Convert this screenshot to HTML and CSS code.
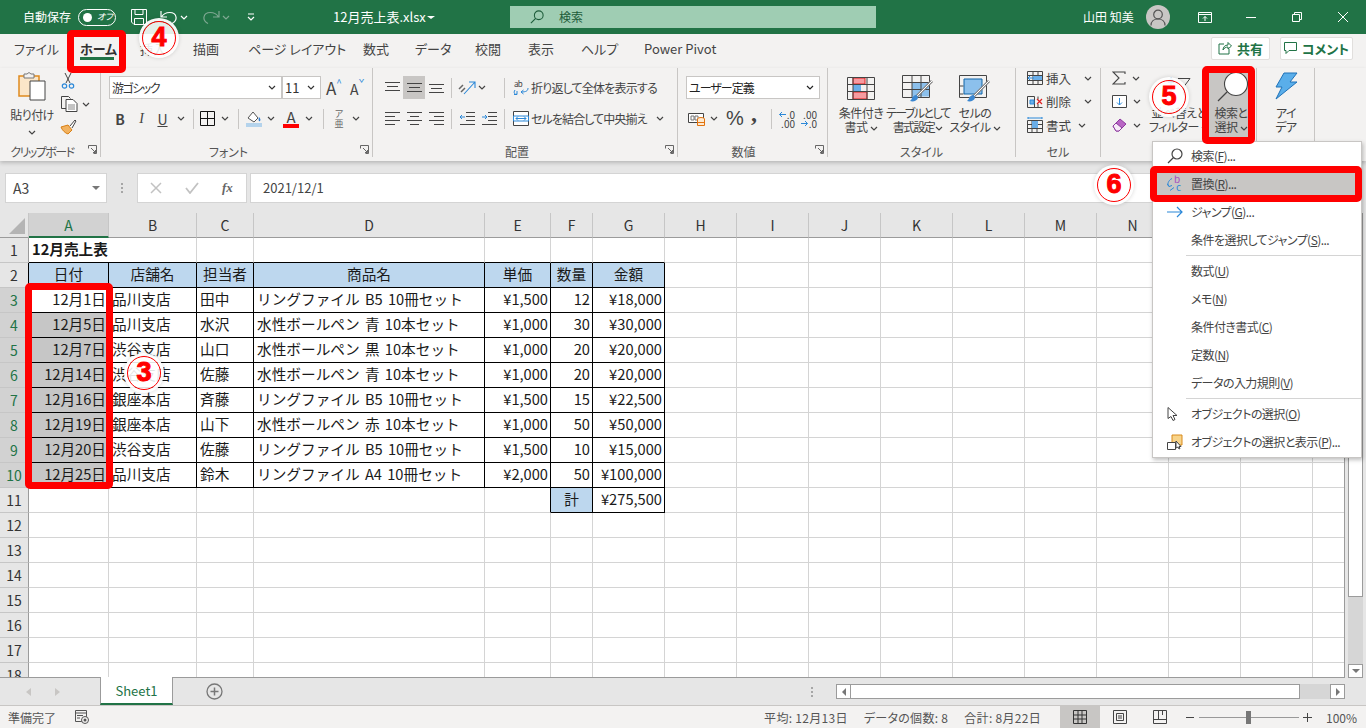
FILE: index.html
```html
<!DOCTYPE html>
<html lang="ja">
    <head>
        <meta charset="utf-8">
        <title>12月売上表.xlsx - Excel</title>
        <link rel="stylesheet" href="styles.css">
    </head>
    <body>
        <svg class="sprite" width="0" height="0">
            <symbol id="chev" viewBox="0 0 8 5"><path d="M1 1l3 3 3-3" fill="none" stroke="currentColor" stroke-width="1.2"/></symbol>
            <symbol id="launch" viewBox="0 0 9 9"><path d="M.5 .5h8v8M.5 .5v3M5.500 8.500h3M3 3l4.500 4.500M7.500 5v2.500H5" fill="none" stroke="#666"/></symbol>
            <symbol id="lens" viewBox="0 0 16 16"><circle cx="10" cy="6" r="5" fill="none" stroke="currentColor" stroke-width="1.200"/><path d="M6.500 9.500L1 15" stroke="currentColor" stroke-width="1.300"/></symbol>
        </svg>

        <header class="titlebar">
            <span class="autosave">自動保存</span>
            <span class="toggle"><i></i><em>オフ</em></span>
            <svg class="t-save" width="16" height="16" viewBox="0 0 16 16"><path d="M.5 .5h15v15H3l-2.500-2.500zM4 .5v5h8v-5M3.500 15.500v-6h9v6" fill="none" stroke="#fff"/></svg>
            <svg class="t-undo" width="18" height="14" viewBox="0 0 18 14"><path d="M1 1v6h6M1.500 7C5 1 15 1 16 7c.5 3-2 5.500-4 6.500" fill="none" stroke="#fff" stroke-width="1.200"/></svg>
            <svg class="t-chev" width="8" height="5"><use href="#chev"/></svg>
            <svg class="t-redo" width="18" height="14" viewBox="0 0 18 14"><path d="M17 1v6h-6M16.500 7C13 1 3 1 2 7c-.5 3 2 5.500 4 6.500" fill="none" stroke="#7fa892" stroke-width="1.200"/></svg>
            <svg class="t-chev dim" width="8" height="5"><use href="#chev"/></svg>
            <svg class="t-custom" width="8" height="8" viewBox="0 0 8 8"><path d="M1 1h6M1 4l3 3 3-3" fill="none" stroke="#fff" stroke-width="1.200"/></svg>
            <span class="doc-name">12月売上表.xlsx</span>
            <span class="doc-caret"></span>
            <div class="searchbox">
                <svg width="14" height="14"><use href="#lens"/></svg>
                <span>検索</span>
            </div>
            <span class="user">山田 知美</span>
            <span class="avatar">
                <svg width="16" height="17" viewBox="0 0 16 17"><circle cx="8" cy="5.500" r="4.300" fill="none" stroke="#555" stroke-width="1.200"/><path d="M1 16.500c0-4 3-6.500 7-6.500s7 2.500 7 6.500" fill="none" stroke="#555" stroke-width="1.200"/></svg>
            </span>
            <svg class="w-display" width="14" height="11" viewBox="0 0 14 11"><path d="M.5 .5h13v10H.5zM.5 2.500h13M7 9V4.500M5 6.500l2-2 2 2" fill="none" stroke="#fff"/></svg>
            <svg class="w-min" width="10" height="1"><path d="M0 .5h10" stroke="#fff"/></svg>
            <svg class="w-max" width="10" height="10" viewBox="0 0 10 10"><path d="M.5 2.500h7v7h-7zM2.500 2.500v-2h7v7h-2" fill="none" stroke="#fff"/></svg>
            <svg class="w-close" width="10" height="10" viewBox="0 0 10 10"><path d="M0 0l10 10M10 0L0 10" stroke="#fff"/></svg>
        </header>

        <nav class="tabs">
            <a class="tab-file">ファイル</a>
            <a class="tab-home">ホーム</a>
            <a class="tab-insert">挿入</a>
            <a class="tab-draw">描画</a>
            <a class="tab-page">ページ レイアウト</a>
            <a class="tab-formula">数式</a>
            <a class="tab-data">データ</a>
            <a class="tab-review">校閲</a>
            <a class="tab-view">表示</a>
            <a class="tab-help">ヘルプ</a>
            <a class="tab-pivot">Power Pivot</a>
            <span class="spacer"></span>
            <button class="share">
                <svg width="14" height="14" viewBox="0 0 14 14"><path d="M6 3H1v10h10V8M5 9c0-3 2-5 5-5V1.500L13.500 5 10 8V6C8 6 6 7 5 9z" fill="none" stroke="#217346"/></svg>
                共有
            </button>
            <button class="comment">
                <svg width="13" height="13" viewBox="0 0 13 13"><path d="M.5 .5h12v8H5l-3 3v-3H.5z" fill="none" stroke="#217346"/></svg>
                コメント
            </button>
        </nav>

        <section class="ribbon">
            <div class="group g-clip">
                <div class="group-body clip-body">
                    <div class="paste">
                        <svg width="28" height="29" viewBox="0 0 28 29"><path d="M1 4h20v20H1z" fill="#fbe6c8" stroke="#e08a1e" stroke-width="1.500"/><path d="M6 4V2h3l2-1.500L13 2h3v4H6z" fill="#f3f2f1" stroke="#777"/><path d="M12 9h15v19H12z" fill="#fff" stroke="#444"/></svg>
                        <span>貼り付け</span>
                        <svg class="chev" width="8" height="5"><use href="#chev"/></svg>
                    </div>
                    <div class="clip-tools">
                        <svg width="14" height="17" viewBox="0 0 14 17"><path d="M4 1l5 10M10 1L5 11" stroke="#444"/><circle cx="3.500" cy="14" r="2.200" fill="none" stroke="#2b88d8" stroke-width="1.200"/><circle cx="10.500" cy="14" r="2.200" fill="none" stroke="#2b88d8" stroke-width="1.200"/></svg>
                        <span class="copy">
                            <svg width="17" height="16" viewBox="0 0 17 16"><path d="M5 12.500H.5V.5h7l2 2" fill="none" stroke="#444"/><path d="M5 3.500h7l4 4v8H5z" fill="#fff" stroke="#444"/><path d="M7 9h7M7 11h7M7 13h7" stroke="#888"/></svg>
                            <svg class="chev" width="8" height="5"><use href="#chev"/></svg>
                        </span>
                        <svg width="17" height="16" viewBox="0 0 17 16"><path d="M1 8l7-2 4 5-4 4C5 14 2 11 1 8z" fill="#f2b25f" stroke="#d87f13"/><path d="M10 7l5-6 1 1-4 7" fill="#fff" stroke="#444"/></svg>
                    </div>
                </div>
                <div class="group-label off narrow">クリップボード<svg class="launch" width="9" height="9"><use href="#launch"/></svg></div>
            </div>

            <div class="group g-font">
                <div class="group-body rows">
                    <div class="row">
                        <span class="select font-name">游ゴシック<svg class="chev" width="8" height="5"><use href="#chev"/></svg></span>
                        <span class="select font-size">11<svg class="chev" width="8" height="5"><use href="#chev"/></svg></span>
                        <span class="font-grow">A<sup>^</sup></span>
                        <span class="font-shrink">A<sup>ˇ</sup></span>
                    </div>
                    <div class="row">
                        <b class="ib w22 fmt">B</b>
                        <i class="ib w21 fmt serif">I</i>
                        <u class="ib w21 fmt">U</u>
                        <span class="ib w16"><svg width="8" height="5"><use href="#chev"/></svg></span>
                        <span class="sep"></span>
                        <span class="ib w18">
                            <svg width="15" height="15" viewBox="0 0 15 15"><path d="M.5 .5h14v14H.5zM7.500 0v15M0 7.500h15" fill="none" stroke="#111"/></svg>
                        </span>
                        <span class="ib w18"><svg width="8" height="5"><use href="#chev"/></svg></span>
                        <span class="sep"></span>
                        <span class="ib w22">
                            <svg width="16" height="16" viewBox="0 0 16 16"><path d="M2 7l5-6 5 6-4 4z" fill="#fff" stroke="#555"/><path d="M13 6c1 1 2 3 1 4s-2-1-1-4z" fill="#2b7cd3"/><path d="M0 12h16v4H0z" fill="#b4d3ec"/></svg>
                        </span>
                        <span class="ib w12"><svg width="8" height="5"><use href="#chev"/></svg></span>
                        <span class="ib w28 color-a">A<i></i></span>
                        <span class="ib w8"><svg width="8" height="5"><use href="#chev"/></svg></span>
                        <span class="sep wide"></span>
                        <span class="ib w22 phonetic">ア<small>亜</small></span>
                        <span class="ib w12"><svg width="8" height="5"><use href="#chev"/></svg></span>
                    </div>
                </div>
                <div class="group-label off">フォント<svg class="launch" width="9" height="9"><use href="#launch"/></svg></div>
            </div>

            <div class="group g-align">
                <div class="group-body rows">
                    <div class="row">
                        <span class="ib w22"><svg width="15" height="13" viewBox="0 0 15 13"><path d="M0 1.500h15M2 5.500h11M0 9.500h15" stroke="#444"/></svg></span>
                        <span class="ib w22 on"><svg width="15" height="13" viewBox="0 0 15 13"><path d="M0 2.500h15M2 6.500h11M0 10.500h15" stroke="#444"/></svg></span>
                        <span class="ib w22"><svg width="15" height="13" viewBox="0 0 15 13"><path d="M0 3.500h15M2 7.500h11M0 11.500h15" stroke="#444"/></svg></span>
                        <span class="sep"></span>
                        <span class="ib w22 orient">
                            <svg width="18" height="16" viewBox="0 0 18 16"><path d="M1 9l4-4M3 12l4-4" stroke="#666" stroke-width="1.500"/><path d="M6 14L17 2M11 2h6v6" fill="none" stroke="#2b88d8" stroke-width="1.100"/></svg>
                        </span>
                        <span class="ib w8"><svg width="8" height="5"><use href="#chev"/></svg></span>
                        <span class="sep far"></span>
                        <span class="txt-btn">
                            <svg width="16" height="17" viewBox="0 0 16 17"><text x="1" y="8" class="ab">ab</text><path d="M2 11c-2 3 0 5 2 4M4 12v3.500H1M15 9c0 3-2 4-7 4m2.500-2L8 13l2.500 2" fill="none" stroke="#2b88d8"/></svg>
                            折り返して全体を表示する
                        </span>
                    </div>
                    <div class="row">
                        <span class="ib w22"><svg width="15" height="13" viewBox="0 0 15 13"><path d="M0 .5h15M0 4.500h10M0 8.500h15M0 12.500h10" stroke="#444"/></svg></span>
                        <span class="ib w22"><svg width="15" height="13" viewBox="0 0 15 13"><path d="M0 .5h15M3 4.500h9M0 8.500h15M3 12.500h9" stroke="#444"/></svg></span>
                        <span class="ib w22"><svg width="15" height="13" viewBox="0 0 15 13"><path d="M0 .5h15M5 4.500h10M0 8.500h15M5 12.500h10" stroke="#444"/></svg></span>
                        <span class="sep"></span>
                        <span class="ib w22"><svg width="15" height="13" viewBox="0 0 15 13"><path d="M6 .5h9M6 4.500h9M6 8.500h9M0 12.500h15" stroke="#444"/><path d="M5 5H0m2-2L0 5l2 2" fill="none" stroke="#2b88d8"/></svg></span>
                        <span class="ib w22"><svg width="15" height="13" viewBox="0 0 15 13"><path d="M6 .5h9M6 4.500h9M6 8.500h9M0 12.500h15" stroke="#444"/><path d="M0 5h5M3 3l2 2-2 2" fill="none" stroke="#2b88d8"/></svg></span>
                        <span class="sep"></span>
                        <span class="txt-btn merge">
                            <svg width="16" height="15" viewBox="0 0 16 15"><path d="M.5 .5h15v14H.5z" fill="#fff" stroke="#444"/><path d="M.5 5h15v5H.5z" fill="#fff" stroke="#2b88d8"/><path d="M3 7.500h10M5 5.500l-2 2 2 2M11 5.500l2 2-2 2" fill="none" stroke="#2b88d8"/></svg>
                            セルを結合して中央揃え
                            <svg class="chev" width="8" height="5"><use href="#chev"/></svg>
                        </span>
                    </div>
                </div>
                <div class="group-label off">配置<svg class="launch" width="9" height="9"><use href="#launch"/></svg></div>
            </div>

            <div class="group g-number">
                <div class="group-body rows">
                    <div class="row">
                        <span class="select num-format">ユーザー定義<svg class="chev" width="8" height="5"><use href="#chev"/></svg></span>
                    </div>
                    <div class="row">
                        <span class="ib w22">
                            <svg width="18" height="16" viewBox="0 0 18 16"><path d="M.5 2.500h15v9H.5z" fill="#fff" stroke="#444"/><path d="M3 5h3v4H3zM7 5h3v4H7z" fill="none" stroke="#777"/><ellipse cx="13" cy="8" rx="3.500" ry="1.500" fill="#fde9d0" stroke="#e2730f"/><path d="M9.500 8v6.500h7V8M9.500 11.500h7" fill="#fde9d0" stroke="#e2730f"/></svg>
                        </span>
                        <span class="ib w12"><svg width="8" height="5"><use href="#chev"/></svg></span>
                        <span class="ib w24 pct">%</span>
                        <span class="ib w14 comma">,</span>
                        <span class="sep mid"></span>
                        <span class="ib w22 dec">
                            <small><svg width="7" height="7" viewBox="0 0 7 7"><path d="M7 3.500H.5M3 1L.5 3.500 3 6" fill="none" stroke="#2b88d8"/></svg>.0</small>
                            <small>.00</small>
                        </span>
                        <span class="ib w22 dec">
                            <small>.00</small>
                            <small><svg width="7" height="7" viewBox="0 0 7 7"><path d="M0 3.500h6.500M4 1l2.500 2.500L4 6" fill="none" stroke="#2b88d8"/></svg>.0</small>
                        </span>
                    </div>
                </div>
                <div class="group-label off wider">数値<svg class="launch" width="9" height="9"><use href="#launch"/></svg></div>
            </div>

            <div class="group g-styles">
                <div class="group-body bigs">
                    <div class="big w56">
                        <svg width="29" height="23" viewBox="0 0 29 23"><path d="M6 1h12v6H6zM6 15h14v7H6z" fill="#f79ba0" stroke="#e02020"/><path d="M6 8h8v6H6z" fill="#6aaee8"/><path d="M.5 .5h27v22H.5zM.5 7.500h27M.5 14.500h27M6 0v23M20 0v23" fill="none" stroke="#444"/></svg>
                        <span>条件付き<br>書式 <svg width="8" height="5"><use href="#chev"/></svg></span>
                    </div>
                    <div class="big w58">
                        <svg width="32" height="27" viewBox="0 0 32 27"><path d="M10 7.500h18v14H10z" fill="#8cc0ec"/><path d="M.5 .5h27v22H.5zM.5 7.500h27M.5 14.500h27M10 0v23M19 0v23" fill="none" stroke="#444"/><path d="M30 6L14 22" stroke="#888" stroke-width="3"/><path d="M30 6L14 22" stroke="#fff"/><path d="M15 20c-3 0-5 2-5 3s-1 2-2 3c3 1 7 0 8-3z" fill="#3b87d1"/></svg>
                        <span class="tight">テーブルとして<br>書式設定 <svg width="8" height="5"><use href="#chev"/></svg></span>
                    </div>
                    <div class="big w56">
                        <svg width="32" height="27" viewBox="0 0 32 27"><path d="M.5 .5h27v22H.5z" fill="none" stroke="#444"/><path d="M5 4h18v15H5z" fill="#8cc0ec" stroke="#0f64a8"/><path d="M.5 19h4M.5 11h4" stroke="#444"/><path d="M30 6L14 22" stroke="#888" stroke-width="3"/><path d="M30 6L14 22" stroke="#fff"/><path d="M15 20c-3 0-5 2-5 3s-1 2-2 3c3 1 7 0 8-3z" fill="#3b87d1"/></svg>
                        <span>セルの<br>スタイル <svg width="8" height="5"><use href="#chev"/></svg></span>
                    </div>
                </div>
                <div class="group-label">スタイル</div>
            </div>

            <div class="group g-cells">
                <div class="group-body cell-list">
                    <span class="cell-btn">
                        <svg width="16" height="14" viewBox="0 0 16 14"><path d="M.5 .5h15v13H.5zM.5 4.500h15M.5 9.500h15M6 0v14M11 0v14" fill="none" stroke="#444"/><path d="M6 5h9v4H6z" fill="#6aaee8"/><path d="M7 7H1m2-2L1 7l2 2" fill="none" stroke="#2b88d8"/></svg>
                        挿入<svg class="chev" width="8" height="5"><use href="#chev"/></svg>
                    </span>
                    <span class="cell-btn">
                        <svg width="16" height="14" viewBox="0 0 16 14"><path d="M.5 1.500h7M.5 12.500h15M.5 1.500v11M7.500 1.500v11M11 1.500v3M11 9v3.500" fill="none" stroke="#444"/><path d="M3 5h4v4H3z" fill="#6aaee8" stroke="#2b88d8"/><path d="M10 4l5 5M15 4l-5 5" stroke="#e02020" stroke-width="1.200"/></svg>
                        削除<svg class="chev" width="8" height="5"><use href="#chev"/></svg>
                    </span>
                    <span class="cell-btn short">
                        <svg width="16" height="16" viewBox="0 0 16 16"><path d="M.5 3.500h15v12H.5zM.5 7.500h15M.5 11.500h15M5 3v13M10 3v13" fill="none" stroke="#444"/><path d="M5 4h6v7H5z" fill="#6aaee8"/><path d="M1 1h14M1 0v2M15 0v2" stroke="#2b88d8"/></svg>
                        書式<svg class="chev" width="8" height="5"><use href="#chev"/></svg>
                    </span>
                </div>
                <div class="group-label">セル</div>
            </div>

            <div class="group g-edit">
                <div class="group-body edit-body">
                    <div class="edit-list">
                        <span class="edit-btn">
                            <svg width="14" height="14" viewBox="0 0 14 14"><path d="M13 3V1H1l6 6-6 6h12v-2" fill="none" stroke="#444" stroke-width="1.100"/></svg>
                            <svg class="chev" width="8" height="5"><use href="#chev"/></svg>
                        </span>
                        <span class="edit-btn">
                            <svg width="15" height="13" viewBox="0 0 15 13"><path d="M.5 .5h14v12H.5z" fill="#fff" stroke="#444"/><path d="M7.500 3v7M5 7.500l2.500 2.500L10 7.500" fill="none" stroke="#2b88d8"/></svg>
                            <svg class="chev" width="8" height="5"><use href="#chev"/></svg>
                        </span>
                        <span class="edit-btn">
                            <svg width="15" height="14" viewBox="0 0 15 14"><path d="M1 8l7-7 6 5-7 7H4z" fill="#b866c4" stroke="#8e3aa0"/><path d="M1 8l3-3 6 5-3 3H4z" fill="#f7ecf8" stroke="#8e3aa0"/></svg>
                            <svg class="chev" width="8" height="5"><use href="#chev"/></svg>
                        </span>
                    </div>
                    <div class="big sort">
                        <svg width="26" height="26" viewBox="0 0 26 26"><path d="M5 2l-3 5h6zM5 7v12" fill="#2b88d8" stroke="#2b88d8"/><path d="M12 3h12L18 11v8" fill="none" stroke="#444"/></svg>
                        <span>並べ替えと<br>フィルター <svg width="8" height="5"><use href="#chev"/></svg></span>
                    </div>
                    <div class="big find">
                        <svg class="find-lens" width="38" height="30" viewBox="0 0 38 30"><circle cx="24" cy="12" r="11.500" fill="#fff" stroke="#444" stroke-width="1.100"/><path d="M15 20L6 29" stroke="#444" stroke-width="1.200"/></svg>
                        <span>検索と<br>選択 <svg width="8" height="5"><use href="#chev"/></svg></span>
                    </div>
                </div>
            </div>

            <div class="group g-ideas">
                <div class="group-body bigs">
                    <div class="big w58">
                        <svg width="23" height="28" viewBox="0 0 23 28"><path d="M9 1h13l-7 9h7L1 27l6-12H1z" fill="#5aaeea" stroke="#1f72b8"/></svg>
                        <span>アイ<br>デア</span>
                    </div>
                </div>
            </div>
        </section>

        <section class="formula-area">
            <div class="namebox">A3<span class="name-caret"></span></div>
            <div class="formula-dots"><i></i><i></i><i></i></div>
            <div class="formula-btns">
                <svg width="12" height="12" viewBox="0 0 12 12"><path d="M1 1l10 10M11 1L1 11" stroke="#c2c2c2" stroke-width="1.500"/></svg>
                <svg width="14" height="12" viewBox="0 0 14 12"><path d="M1 6l4 5 8-10" fill="none" stroke="#c2c2c2" stroke-width="1.800"/></svg>
                <em>fx</em>
            </div>
            <div class="formula-input">2021/12/1</div>
        </section>

        <section class="sheet">
            <div class="grid-wrap">
                <table class="grid">
                    <colgroup>
                        <col class="c-head"><col class="c-a"><col class="c-b"><col class="c-c"><col class="c-d"><col class="c-e"><col class="c-f"><col class="c-g">
                        <col class="c-n"><col class="c-n"><col class="c-n"><col class="c-n"><col class="c-n"><col class="c-n"><col class="c-n"><col class="c-n"><col class="c-n"><col class="c-n">
                    </colgroup>
                    <thead>
                        <tr>
                            <th class="corner"><span></span></th>
                            <th class="cur">A</th><th>B</th><th>C</th><th>D</th><th>E</th><th>F</th><th>G</th><th>H</th><th>I</th><th>J</th><th>K</th><th>L</th><th>M</th><th>N</th><th>O</th><th>P</th><th></th>
                        </tr>
                    </thead>
                    <tbody>
                        <tr><th>1</th><td class="title under" colspan="2">12月売上表</td><td class="under"></td><td class="under"></td><td class="under"></td><td class="under"></td><td class="under"></td><td></td><td></td><td></td><td></td><td></td><td></td><td></td><td></td><td></td><td></td></tr>
                        <tr class="t"><th class="edge">2</th><td class="hd">日付</td><td class="hd">店舗名</td><td class="hd">担当者</td><td class="hd">商品名</td><td class="hd">単価</td><td class="hd">数量</td><td class="hd">金額</td><td></td><td></td><td></td><td></td><td></td><td></td><td></td><td></td><td></td><td></td></tr>
                        <tr class="t"><th class="edge cur-row">3</th><td class="num">12月1日</td><td>品川支店</td><td>田中</td><td class="item">リングファイル B5 10冊セット</td><td class="num">¥1,500</td><td class="num">12</td><td class="num">¥18,000</td><td></td><td></td><td></td><td></td><td></td><td></td><td></td><td></td><td></td><td></td></tr>
                        <tr class="t"><th class="edge cur-row">4</th><td class="num sel">12月5日</td><td>品川支店</td><td>水沢</td><td class="item">水性ボールペン 青 10本セット</td><td class="num">¥1,000</td><td class="num">30</td><td class="num">¥30,000</td><td></td><td></td><td></td><td></td><td></td><td></td><td></td><td></td><td></td><td></td></tr>
                        <tr class="t"><th class="edge cur-row">5</th><td class="num sel">12月7日</td><td>渋谷支店</td><td>山口</td><td class="item">水性ボールペン 黒 10本セット</td><td class="num">¥1,000</td><td class="num">20</td><td class="num">¥20,000</td><td></td><td></td><td></td><td></td><td></td><td></td><td></td><td></td><td></td><td></td></tr>
                        <tr class="t"><th class="edge cur-row">6</th><td class="num sel">12月14日</td><td>渋谷支店</td><td>佐藤</td><td class="item">水性ボールペン 青 10本セット</td><td class="num">¥1,000</td><td class="num">20</td><td class="num">¥20,000</td><td></td><td></td><td></td><td></td><td></td><td></td><td></td><td></td><td></td><td></td></tr>
                        <tr class="t"><th class="edge cur-row">7</th><td class="num sel">12月16日</td><td>銀座本店</td><td>斉藤</td><td class="item">リングファイル B5 10冊セット</td><td class="num">¥1,500</td><td class="num">15</td><td class="num">¥22,500</td><td></td><td></td><td></td><td></td><td></td><td></td><td></td><td></td><td></td><td></td></tr>
                        <tr class="t"><th class="edge cur-row">8</th><td class="num sel">12月19日</td><td>銀座本店</td><td>山下</td><td class="item">水性ボールペン 赤 10本セット</td><td class="num">¥1,000</td><td class="num">50</td><td class="num">¥50,000</td><td></td><td></td><td></td><td></td><td></td><td></td><td></td><td></td><td></td><td></td></tr>
                        <tr class="t"><th class="edge cur-row">9</th><td class="num sel">12月20日</td><td>渋谷支店</td><td>佐藤</td><td class="item">リングファイル B5 10冊セット</td><td class="num">¥1,500</td><td class="num">10</td><td class="num">¥15,000</td><td></td><td></td><td></td><td></td><td></td><td></td><td></td><td></td><td></td><td></td></tr>
                        <tr class="t"><th class="edge cur-row">10</th><td class="num sel">12月25日</td><td>品川支店</td><td>鈴木</td><td class="item">リングファイル A4 10冊セット</td><td class="num">¥2,000</td><td class="num">50</td><td class="num">¥100,000</td><td></td><td></td><td></td><td></td><td></td><td></td><td></td><td></td><td></td><td></td></tr>
                        <tr><th>11</th><td></td><td></td><td></td><td></td><td class="right-line"></td><td class="hd box">計</td><td class="num box">¥275,500</td><td></td><td></td><td></td><td></td><td></td><td></td><td></td><td></td><td></td><td></td></tr>
                        <tr><th>12</th><td></td><td></td><td></td><td></td><td></td><td></td><td></td><td></td><td></td><td></td><td></td><td></td><td></td><td></td><td></td><td></td><td></td></tr>
                        <tr><th>13</th><td></td><td></td><td></td><td></td><td></td><td></td><td></td><td></td><td></td><td></td><td></td><td></td><td></td><td></td><td></td><td></td><td></td></tr>
                        <tr><th>14</th><td></td><td></td><td></td><td></td><td></td><td></td><td></td><td></td><td></td><td></td><td></td><td></td><td></td><td></td><td></td><td></td><td></td></tr>
                        <tr><th>15</th><td></td><td></td><td></td><td></td><td></td><td></td><td></td><td></td><td></td><td></td><td></td><td></td><td></td><td></td><td></td><td></td><td></td></tr>
                        <tr><th>16</th><td></td><td></td><td></td><td></td><td></td><td></td><td></td><td></td><td></td><td></td><td></td><td></td><td></td><td></td><td></td><td></td><td></td></tr>
                        <tr><th>17</th><td></td><td></td><td></td><td></td><td></td><td></td><td></td><td></td><td></td><td></td><td></td><td></td><td></td><td></td><td></td><td></td><td></td></tr>
                        <tr><th>18</th><td></td><td></td><td></td><td></td><td></td><td></td><td></td><td></td><td></td><td></td><td></td><td></td><td></td><td></td><td></td><td></td><td></td></tr>
                    </tbody>
                </table>
            </div>
            <div class="vscroll">
                <span class="v-thumb"></span>
                <span class="v-rest"></span>
                <span class="v-down"></span>
            </div>
        </section>

        <section class="sheetbar">
            <span class="nav-arrow left"></span>
            <span class="nav-arrow right"></span>
            <span class="sheet-tab">Sheet1</span>
            <svg class="add-sheet" width="17" height="17" viewBox="0 0 17 17"><circle cx="8.500" cy="8.500" r="7.500" fill="none" stroke="#777" stroke-width="1.300"/><path d="M8.500 4.500v8M4.500 8.500h8" stroke="#777" stroke-width="1.500"/></svg>
            <span class="spacer"></span>
            <span class="bar-dots"><i></i><i></i><i></i></span>
            <div class="hscroll">
                <span class="h-btn"><i class="tri-l"></i></span>
                <span class="h-thumb"></span>
                <span class="h-track"></span>
                <span class="h-btn"><i class="tri-r"></i></span>
            </div>
        </section>

        <footer class="statusbar">
            <span class="ready">準備完了</span>
            <svg class="macro" width="14" height="14" viewBox="0 0 14 14"><path d="M.5 .5h11v11H.5zM.5 3h11M2 5.500h6M2 8h3" fill="none" stroke="#555"/><circle cx="10" cy="10" r="3.500" fill="#f3f2f1" stroke="#555"/><circle cx="10" cy="10" r="1.500" fill="#555"/></svg>
            <span class="spacer"></span>
            <span class="stat">平均: 12月13日</span>
            <span class="stat">データの個数: 8</span>
            <span class="stat">合計: 8月22日</span>
            <span class="view on">
                <svg width="14" height="14" viewBox="0 0 14 14"><path d="M.5 .5h13v13H.5zM5 0v14M9 0v14M0 5h14M0 9h14" fill="none" stroke="#333"/></svg>
            </span>
            <span class="view">
                <svg width="14" height="14" viewBox="0 0 14 14"><path d="M.5 .5h13v13H.5zM3.500 3.500h7v7h-7zM5 6h4M5 8h4" fill="none" stroke="#444"/></svg>
            </span>
            <span class="view">
                <svg width="14" height="14" viewBox="0 0 14 14"><path d="M.5 .5h13v13H.5zM.5 9.500h13M5.500 0v9.500M9.500 0v5" fill="none" stroke="#444"/></svg>
            </span>
            <div class="zoom">
                <span class="z-minus"></span>
                <span class="z-track"><i></i></span>
                <span class="z-plus"></span>
            </div>
            <span class="pct-label">100%</span>
        </footer>

        <div class="menu">
            <div class="menu-item"><svg class="m-icon" width="16" height="16"><use href="#lens"/></svg><span>検索(<u>F</u>)...</span></div>
            <div class="menu-item active">
                <svg class="m-icon" width="16" height="17" viewBox="0 0 16 17"><text x="7" y="7" class="sb">b</text><text x="9" y="15" class="sc">c</text><path d="M5 3C1 5 0 9 2 11M0 8l2 3 3-1M3 15l4-3" fill="none" stroke="#2b88d8"/></svg>
                <span>置換(<u>R</u>)...</span>
            </div>
            <div class="menu-item"><svg class="m-icon" width="16" height="12" viewBox="0 0 16 12"><path d="M0 6h15M10 1l5 5-5 5" fill="none" stroke="#2b88d8" stroke-width="1.200"/></svg><span>ジャンプ(<u>G</u>)...</span></div>
            <div class="menu-item"><span>条件を選択してジャンプ(<u>S</u>)...</span></div>
            <div class="menu-sep"></div>
            <div class="menu-item"><span>数式(<u>U</u>)</span></div>
            <div class="menu-item"><span>メモ(<u>N</u>)</span></div>
            <div class="menu-item"><span>条件付き書式(<u>C</u>)</span></div>
            <div class="menu-item"><span>定数(<u>N</u>)</span></div>
            <div class="menu-item"><span>データの入力規則(<u>V</u>)</span></div>
            <div class="menu-sep"></div>
            <div class="menu-item"><svg class="m-icon" width="12" height="15" viewBox="0 0 12 15"><path d="M1 1v11l3-2 2 4 2-1-2-4h4z" fill="#fff" stroke="#444"/></svg><span>オブジェクトの選択(<u>O</u>)</span></div>
            <div class="menu-item"><svg class="m-icon" width="16" height="16" viewBox="0 0 16 16"><path d="M5 1h10v10H5z" fill="#f8d48a" stroke="#d88a1c"/><path d="M.5 8.500h8v7h-8z" fill="#fff" stroke="#444"/><path d="M9 7v7l2-1 1 2 1-.5-1-2h2z" fill="#fff" stroke="#444"/></svg><span>オブジェクトの選択と表示(<u>P</u>)...</span></div>
        </div>

        <div class="mark mark-home"></div>
        <div class="mark mark-find"></div>
        <div class="mark mark-replace"></div>
        <div class="mark mark-dates"></div>
        <div class="badge badge-3">3</div>
        <div class="badge badge-4">4</div>
        <div class="badge badge-5">5</div>
        <div class="badge badge-6">6</div>
    </body>
</html>
```

FILE: styles.css
```css
* {
    box-sizing: border-box;
}
html, body {
    margin: 0;
    padding: 0;
}
body {
    width: 1366px;
    height: 728px;
    overflow: hidden;
    position: relative;
    display: flex;
    flex-direction: column;
    background-color: #e6e6e6;
    color: #444;
    font-family: "Noto Sans CJK JP", "Noto Sans", sans-serif;
    font-size: 12px;
    font-feature-settings: "palt";
}
svg {
    display: block;
    flex: none;
}
.sprite {
    position: absolute;
}
.spacer {
    flex: 1;
}

/* title bar */
.titlebar {
    height: 34px;
    flex: none;
    display: flex;
    align-items: center;
    background-color: #217346;
    color: #fff;
    padding-left: 23px;
}
.autosave {
    width: 48px;
    margin-bottom: 2px;
}
.toggle {
    margin-left: 7px;
    width: 38px;
    height: 17px;
    border: 1px solid #fff;
    border-radius: 9px;
    display: flex;
    align-items: center;
    padding-left: 4px;
}
.toggle i {
    width: 9px;
    height: 9px;
    border-radius: 50%;
    background-color: #fff;
}
.toggle em {
    font-size: 9px;
    margin-left: 5px;
    line-height: 12px;
}
.t-save {
    margin-left: 15px;
}
.t-undo {
    margin-left: 13px;
}
.t-chev {
    margin-left: 2px;
    color: #fff;
}
.t-chev.dim {
    color: #7fa892;
}
.t-redo {
    margin-left: 14px;
}
.t-custom {
    margin-left: 17px;
}
.doc-name {
    margin-left: 78px;
    margin-bottom: 2px;
    width: 90px;
    font-size: 13px;
    white-space: nowrap;
}
.doc-caret {
    margin-left: 4px;
    border-left: 4px solid transparent;
    border-right: 4px solid transparent;
    border-top: 3px solid #fff;
}
.searchbox {
    margin-left: 75px;
    margin-bottom: 1px;
    width: 366px;
    height: 22px;
    background-color: #9fcdb3;
    color: #1d5c3a;
    display: flex;
    align-items: center;
    padding-left: 20px;
}
.searchbox span {
    margin-left: 15px;
}
.user {
    margin-left: 207px;
    margin-bottom: 2px;
    width: 52px;
    white-space: nowrap;
}
.avatar {
    margin-left: 11px;
    width: 24px;
    height: 24px;
    border-radius: 50%;
    background-color: #c8c6c4;
    display: flex;
    align-items: center;
    justify-content: center;
}
.w-display {
    margin-left: 28px;
}
.w-min {
    margin-left: 34px;
}
.w-max {
    margin-left: 36px;
}
.w-close {
    margin-left: 36px;
}

/* tabs */
.tabs {
    height: 34px;
    flex: none;
    display: flex;
    align-items: center;
    background-color: #f3f2f1;
    font-size: 13px;
    padding-right: 13px;
    padding-bottom: 6px;
    white-space: nowrap;
}
.tabs a {
    display: block;
}
.tab-file { margin-left: 14px; width: 36px; }
.tab-home {
    margin-left: 30px;
    width: 33px;
    font-weight: bold;
    color: #333;
    position: relative;
}
.tab-home::after {
    content: "";
    position: absolute;
    left: 0;
    right: -1px;
    top: 18px;
    height: 3px;
    background-color: #217346;
}
.tab-insert { margin-left: 27px; width: 26px; }
.tab-draw { margin-left: 27px; width: 26px; }
.tab-page { margin-left: 29px; width: 86px; }
.tab-formula { margin-left: 29px; width: 26px; }
.tab-data { margin-left: 26px; width: 32px; }
.tab-review { margin-left: 28px; width: 25px; }
.tab-view { margin-left: 28px; width: 26px; }
.tab-help { margin-left: 27px; width: 33px; }
.tab-pivot { margin-left: 30px; width: 75px; }
.share, .comment {
    height: 23px;
    background-color: #fff;
    border: 1px solid #e1dfdd;
    border-radius: 2px;
    color: #217346;
    font-family: inherit;
    font-feature-settings: inherit;
    font-size: 13px;
    font-weight: bold;
    display: flex;
    align-items: center;
    justify-content: center;
    gap: 5px;
    padding: 0;
}
.share {
    width: 59px;
}
.comment {
    width: 73px;
    margin-left: 10px;
}

/* ribbon */
.ribbon {
    height: 93px;
    flex: none;
    display: flex;
    background-color: #f3f2f1;
    box-shadow: 0 2px 4px rgba(0, 0, 0, 0.2);
    position: relative;
    z-index: 2;
}
.group {
    height: 89px;
    border-right: 1px solid #c8c6c4;
    display: flex;
    flex-direction: column;
    position: relative;
    flex: none;
}
.group-body {
    height: 73px;
    flex: none;
}
.group-label {
    flex: 1;
    text-align: center;
    line-height: 14px;
    padding-top: 4px;
    color: #555;
    white-space: nowrap;
}
.group-label.off {
    padding-right: 16px;
}
.group-label.wider {
    padding-right: 18px;
}
.group-label.narrow {
    letter-spacing: -1.5px;
}
.launch {
    position: absolute;
    right: 3px;
    bottom: 3px;
}
.g-clip { width: 101px; }
.g-font { width: 272px; }
.g-align { width: 305px; }
.g-number { width: 150px; }
.g-styles { width: 188px; }
.g-cells { width: 85px; }
.g-edit { width: 156px; }
.g-ideas { width: 58px; }

.clip-body {
    display: flex;
    padding-top: 4px;
}
.paste {
    width: 57px;
    display: flex;
    flex-direction: column;
    align-items: center;
    line-height: 14px;
    padding-left: 7px;
}
.paste span {
    margin-top: 7px;
    white-space: nowrap;
    letter-spacing: -0.6px;
}
.paste .chev {
    margin-top: 8px;
}
.clip-tools {
    display: flex;
    flex-direction: column;
    gap: 7px;
    padding-left: 3px;
}
.clip-tools svg:first-child {
    margin-left: 1px;
}
.copy {
    display: flex;
    align-items: center;
    gap: 4px;
}

.rows {
    padding-top: 8px;
    padding-left: 8px;
    display: flex;
    flex-direction: column;
    gap: 8px;
}
.row {
    height: 23px;
    display: flex;
    align-items: center;
}
.ib {
    height: 23px;
    display: flex;
    align-items: center;
    justify-content: center;
    flex: none;
}
.ib.on {
    background-color: #c8c6c4;
}
.w8 { width: 8px; }
.w12 { width: 12px; }
.w14 { width: 14px; }
.w16 { width: 16px; }
.w18 { width: 18px; }
.w21 { width: 21px; }
.w22 { width: 22px; }
.w24 { width: 24px; }
.w28 { width: 28px; }
.sep {
    width: 1px;
    height: 20px;
    background-color: #c8c6c4;
    margin: 0 4px;
    flex: none;
}
.sep.wide {
    margin-left: 10px;
}
.sep.far {
    margin-left: 18px;
}
.sep.mid {
    margin-left: 10px;
}
.select {
    height: 23px;
    background-color: #fff;
    border: 1px solid #c8c6c4;
    display: flex;
    align-items: center;
    justify-content: space-between;
    padding: 0 5px 0 2px;
    color: #333;
    font-size: 12px;
}
.font-name {
    width: 173px;
    letter-spacing: -1.5px;
}
.font-size {
    width: 39px;
    font-size: 13px;
}
.font-grow, .font-shrink {
    font-size: 17px;
    line-height: 20px;
    display: flex;
}
.font-grow {
    margin-left: 5px;
}
.font-shrink {
    margin-left: 8px;
    font-size: 14px;
    padding-top: 2px;
}
.font-grow sup, .font-shrink sup {
    font-size: 10px;
    color: #2b88d8;
    line-height: 10px;
}
.fmt {
    font-size: 14px;
    text-decoration-thickness: 1px;
}
.serif {
    font-family: "Liberation Serif", serif;
}
.color-a {
    font-size: 15px;
    flex-direction: column;
    line-height: 15px;
}
.color-a i {
    width: 16px;
    height: 4px;
    background-color: #ff0000;
}
.phonetic {
    flex-direction: column;
    font-size: 9px;
    line-height: 10px;
    color: #666;
}
.phonetic small {
    font-size: 9px;
}
.txt-btn {
    margin-left: 4px;
    display: flex;
    align-items: center;
    gap: 2px;
    white-space: nowrap;
    letter-spacing: -0.8px;
}
.txt-btn.merge {
    letter-spacing: -0.9px;
}
.txt-btn .chev {
    margin-left: 7px;
}
.ab {
    font-size: 8px;
    fill: #444;
}
.num-format {
    width: 134px;
    color: #222;
    letter-spacing: -1px;
}
.pct {
    margin-left: 3px;
    font-size: 20px;
    font-family: "Liberation Sans", sans-serif;
}
.comma {
    font-size: 24px;
    font-weight: bold;
    font-family: "Liberation Serif", serif;
    padding-bottom: 10px;
}
.dec {
    flex-direction: column;
    align-items: flex-end;
    padding-right: 3px;
}
.dec small {
    display: flex;
    align-items: center;
    gap: 1px;
    font-size: 10px;
    line-height: 9px;
}
.bigs {
    display: flex;
    padding-top: 7px;
    padding-left: 5px;
}
.big {
    flex: none;
    display: flex;
    flex-direction: column;
    align-items: center;
    text-align: center;
    line-height: 14px;
    white-space: nowrap;
}
.big > svg {
    height: 27px;
}
.big > span {
    margin-top: 4px;
    letter-spacing: -0.5px;
}
.big > span.tight {
    letter-spacing: -1.6px;
}
.big > span svg {
    display: inline-block;
    vertical-align: middle;
}
.w56 { width: 56px; }
.w58 { width: 58px; }
.g-ideas .bigs {
    padding-left: 0;
    padding-top: 4px;
}
.g-ideas .big > svg {
    height: 28px;
}
.g-ideas .big > span {
    margin-top: 6px;
}

.cell-list {
    padding-left: 11px;
    display: flex;
    flex-direction: column;
    gap: 3.500px;
}
.cell-btn {
    height: 20px;
    display: flex;
    align-items: center;
    gap: 3px;
    font-size: 12.500px;
}
.cell-btn .chev {
    margin-left: 10px;
}
.cell-btn.short .chev {
    margin-left: 4px;
}
.edit-body {
    display: flex;
    padding-left: 11px;
    padding-top: 4px;
}
.edit-list {
    width: 38px;
    margin-top: -4px;
    display: flex;
    flex-direction: column;
    gap: 3.500px;
}
.edit-btn {
    height: 20px;
    display: flex;
    align-items: center;
    gap: 6px;
}
.big.sort {
    width: 58px;
    padding-top: 3px;
    margin-right: -1px;
}
.big.find {
    width: 48px;
    height: 68px;
    background-color: #c8c6c4;
}
.big.find > svg {
    height: 30px;
}
.big.sort > span, .big.find > span {
    margin-top: 4px;
}

/* formula bar */
.formula-area {
    height: 52px;
    flex: none;
    display: flex;
    padding: 12px 16px 10px 5px;
}
.namebox {
    width: 102px;
    background-color: #fff;
    border: 1px solid #d4d4d4;
    display: flex;
    align-items: center;
    justify-content: space-between;
    padding: 0 6px 0 7px;
    font-size: 14px;
}
.name-caret {
    border-left: 4px solid transparent;
    border-right: 4px solid transparent;
    border-top: 4px solid #777;
}
.formula-dots {
    width: 30px;
    display: flex;
    flex-direction: column;
    align-items: center;
    justify-content: center;
    gap: 2px;
}
.formula-dots i, .bar-dots i {
    width: 2px;
    height: 2px;
    background-color: #a6a6a6;
    display: block;
}
.formula-btns {
    width: 110px;
    background-color: #fff;
    border: 1px solid #d4d4d4;
    display: flex;
    align-items: center;
    padding-left: 12px;
    gap: 23px;
}
.formula-btns em {
    font-family: "Liberation Serif", serif;
    font-weight: bold;
    font-size: 13px;
    color: #666;
}
.formula-input {
    flex: 1;
    margin-left: 3px;
    background-color: #fff;
    border: 1px solid #d4d4d4;
    padding-left: 12px;
    font-size: 13px;
    line-height: 27px;
}

/* sheet */
.sheet {
    height: 465px;
    flex: none;
    display: flex;
    background-color: #e6e6e6;
}
.grid-wrap {
    width: 1345px;
    overflow: hidden;
    border-right: 1px solid #9b9b9b;
    border-bottom: 1px solid #9b9b9b;
    background-color: #fff;
}
.grid {
    border-collapse: separate;
    border-spacing: 0;
    table-layout: fixed;
    width: 1385px;
    font-feature-settings: normal;
    font-size: 14.670px;
    color: #1a1a1a;
}
.c-head { width: 29px; }
.c-a { width: 80px; }
.c-b { width: 88px; }
.c-c { width: 57px; }
.c-d { width: 231px; }
.c-e { width: 66px; }
.c-f { width: 42px; }
.c-g { width: 72px; }
.c-n { width: 72px; }
.grid tr {
    height: 25px;
}
.grid th {
    background-color: #e6e6e6;
    border-right: 1px solid #c6c6c6;
    border-bottom: 1px solid #c6c6c6;
    font-weight: normal;
    color: #333;
    font-size: 14px;
    padding: 0;
    height: 25px;
    line-height: 20px;
}
.grid thead th {
    border-bottom: 1px solid #9b9b9b;
}
.grid tbody th {
    border-right: 1px solid #9b9b9b;
}
.grid thead th.cur {
    background-color: #d2d2d2;
    color: #217346;
    border-bottom: 2px solid #217346;
}
.grid tbody th.cur-row {
    background-color: #d2d2d2;
    color: #217346;
}
.grid tbody th.edge {
    border-right-color: #000;
}
.corner {
    position: relative;
}
.corner span {
    position: absolute;
    right: 3px;
    bottom: 3px;
    border-left: 16px solid transparent;
    border-bottom: 16px solid #b4b4b4;
}
.grid td {
    border-right: 1px solid #d4d4d4;
    border-bottom: 1px solid #d4d4d4;
    padding: 0 3px 2px;
    height: 25px;
    line-height: 20px;
    white-space: nowrap;
    overflow: hidden;
}
.grid td.title {
    font-weight: bold;
}
.grid td.under {
    border-bottom-color: #000;
}
.t td:nth-child(-n+8) {
    border-right-color: #000;
    border-bottom-color: #000;
}
.grid td.hd {
    background-color: #bdd7ee;
    text-align: center;
}
.grid td.num {
    text-align: right;
    padding-right: 2px;
}
.grid td.item {
    word-spacing: 2px;
}
.grid td.sel {
    background-color: #c6c6c6;
}
.grid td.right-line {
    border-right-color: #000;
}
.grid td.box {
    border-right-color: #000;
    border-bottom-color: #000;
}
.vscroll {
    width: 21px;
    padding: 0 3px;
    display: flex;
    flex-direction: column;
    background-color: #e6e6e6;
}
.v-thumb {
    height: 384px;
    flex: none;
    background-color: #fff;
    border: 1px solid #9b9b9b;
    border-top: none;
}
.v-rest {
    flex: 1;
    background-color: #d6d6d6;
}
.v-down {
    height: 14px;
    flex: none;
    background-color: #fff;
    border: 1px solid #9b9b9b;
    position: relative;
}
.v-down::after {
    content: "";
    position: absolute;
    left: 3px;
    top: 4px;
    border-left: 4px solid transparent;
    border-right: 4px solid transparent;
    border-top: 4px solid #777;
}

/* sheet tabs */
.sheetbar {
    height: 28px;
    flex: none;
    display: flex;
    align-items: center;
    background-color: #e6e6e6;
    border-bottom: 1px solid #c8c6c4;
    position: relative;
}
.nav-arrow {
    border-top: 4px solid transparent;
    border-bottom: 4px solid transparent;
}
.nav-arrow.left {
    margin-left: 26px;
    border-right: 5px solid #c8c6c4;
}
.nav-arrow.right {
    margin-left: 24px;
    border-left: 5px solid #c8c6c4;
}
.sheet-tab {
    margin-left: 40px;
    width: 73px;
    height: 28px;
    background-color: #fff;
    border-left: 1px solid #9b9b9b;
    border-right: 1px solid #9b9b9b;
    border-bottom: 2px solid #217346;
    color: #217346;
    font-size: 13px;
    text-align: center;
    line-height: 27px;
    margin-top: -1px;
}
.add-sheet {
    margin-left: 33px;
}
.bar-dots {
    display: flex;
    flex-direction: column;
    gap: 2px;
    margin-right: 23px;
}
.hscroll {
    width: 509px;
    height: 15px;
    margin-right: 21px;
    display: flex;
    background-color: #d6d6d6;
}
.h-btn {
    width: 15px;
    height: 15px;
    flex: none;
    background-color: #fff;
    border: 1px solid #9b9b9b;
    display: flex;
    align-items: center;
    justify-content: center;
}
.tri-l, .tri-r {
    border-top: 4px solid transparent;
    border-bottom: 4px solid transparent;
}
.tri-l {
    border-right: 4px solid #777;
}
.tri-r {
    border-left: 4px solid #777;
}
.h-thumb {
    width: 449px;
    background-color: #fff;
    border: 1px solid #9b9b9b;
    border-left: none;
}
.h-track {
    flex: 1;
}

/* status bar */
.statusbar {
    height: 22px;
    flex: none;
    display: flex;
    align-items: center;
    background-color: #f3f2f1;
    padding-left: 8px;
    color: #555;
}
.ready {
    width: 48px;
    white-space: nowrap;
}
.macro {
    margin-left: 19px;
}
.stat {
    margin-right: 16px;
    white-space: nowrap;
    letter-spacing: 0.3px;
}
.view {
    width: 40px;
    height: 22px;
    display: flex;
    align-items: center;
    justify-content: center;
    flex: none;
}
.view.on {
    background-color: #c8c6c4;
    margin-left: 3px;
}
.zoom {
    margin-left: 1px;
    display: flex;
    align-items: center;
    width: 141px;
}
.z-minus {
    width: 8px;
    height: 1px;
    background-color: #444;
    margin-left: 5px;
}
.z-track {
    width: 100px;
    height: 1px;
    background-color: #999;
    margin-left: 5px;
    position: relative;
}
.z-track i {
    position: absolute;
    left: 47px;
    top: -6px;
    width: 5px;
    height: 13px;
    background-color: #777;
}
.z-plus {
    width: 9px;
    height: 9px;
    margin-left: 4px;
    background: linear-gradient(#444, #444) center / 9px 1px no-repeat, linear-gradient(#444, #444) center / 1px 9px no-repeat;
}
.pct-label {
    margin-right: 8px;
    margin-left: 4px;
    width: 32px;
}

/* find menu */
.menu {
    position: absolute;
    left: 1152px;
    top: 141px;
    width: 210px;
    height: 317px;
    background-color: #fff;
    border: 1px solid #c8c6c4;
    box-shadow: 1px 2px 4px rgba(0, 0, 0, 0.25);
    z-index: 3;
    font-size: 12px;
    letter-spacing: -0.55px;
}
.menu-item {
    height: 28px;
    display: flex;
    align-items: center;
    position: relative;
    padding-left: 38px;
    padding-bottom: 2px;
    white-space: nowrap;
}
.menu-item.active {
    background-color: #c8c6c4;
}
.m-icon {
    position: absolute;
    left: 14px;
    top: 50%;
    transform: translateY(-50%);
    color: #444;
}
.menu-sep {
    height: 3px;
    margin: 0 0 0 33px;
    padding-top: 1px;
}
.menu-sep::before {
    content: "";
    display: block;
    height: 1px;
    background-color: #d4d4d4;
}
.sb {
    font-size: 10px;
    fill: #a64ec0;
}
.sc {
    font-size: 10px;
    fill: #2b88d8;
}

/* red annotation marks */
.mark {
    position: absolute;
    border: 7px solid #ff0000;
    border-radius: 5px;
    z-index: 4;
}
.mark-home {
    left: 67px;
    top: 30px;
    width: 59px;
    height: 43px;
}
.mark-find {
    left: 1202px;
    top: 66px;
    width: 53px;
    height: 78px;
}
.mark-replace {
    left: 1150px;
    top: 166px;
    width: 212px;
    height: 36px;
}
.mark-dates {
    left: 25px;
    top: 283px;
    width: 88px;
    height: 206px;
}
.badge {
    position: absolute;
    width: 34px;
    height: 34px;
    border-radius: 50%;
    border: 1.500px solid #ff0000;
    background-color: rgba(255, 255, 255, 0.88);
    box-shadow: 0 0 0 3px rgba(255, 255, 255, 0.95), 0 0 4px 3px rgba(0, 0, 0, 0.15);
    color: #ff0000;
    font-family: "Liberation Sans", sans-serif;
    font-weight: bold;
    font-size: 27px;
    line-height: 31px;
    text-align: center;
    -webkit-text-stroke: 1px #ff0000;
    z-index: 5;
}
.badge-3 { left: 127px; top: 356px; }
.badge-4 { left: 142px; top: 21px; }
.badge-5 { left: 1152px; top: 80px; }
.badge-6 { left: 1097px; top: 168px; }
```
